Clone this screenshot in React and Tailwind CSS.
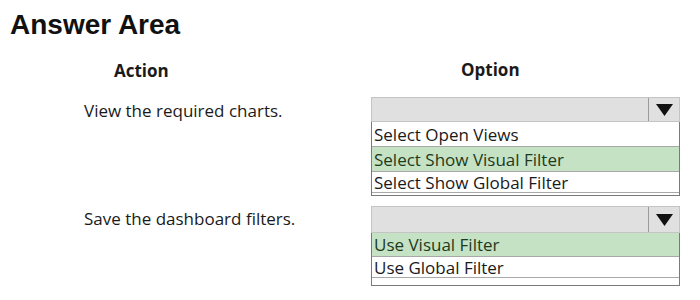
const bodyFont = { fontFamily: '"Open Sans", "Noto Sans", sans-serif' };

function Arrow() {
  return (
    <svg width="17" height="12" viewBox="0 0 17 12" aria-hidden="true">
      <path d="M0 0 H17 L8.5 12 Z" fill="#111" />
    </svg>
  );
}

function Dropdown({ options, selected, rowHeights, headerHeight, tail }) {
  return (
    <div className="w-[309px]">
      <div className="flex border border-[#c4c4c4] bg-[#e0e0e0]" style={{ height: headerHeight }}>
        <div className="flex-1" />
        <div className="flex w-[31px] items-center justify-center border-l border-[#9a9a9a]">
          <Arrow />
        </div>
      </div>
      <div className="border-x border-b border-[#7a7a7a]">
        {options.map((opt, i) => (
          <div
            key={opt}
            className={
              'flex items-center overflow-hidden border-b border-[#a8a8a8] pl-[2px] text-[17px] leading-none ' +
              (i === selected ? 'bg-[#c6e2c4] text-[#1d3a1d]' : 'bg-white text-[#1a1a1a]')
            }
            style={{ height: rowHeights[i] }}
          >
            {opt}
          </div>
        ))}
        <div className="bg-white" style={{ height: tail }} />
      </div>
    </div>
  );
}

export default function App() {
  return (
    <div className="h-[300px] w-[700px] overflow-hidden bg-white text-[#1a1a1a]" style={bodyFont}>
      <h1
        className="pl-[10px] pt-[8px] text-[28px] font-bold leading-[34px] text-[#111]"
        style={{ fontFamily: '"Liberation Sans", Arial, sans-serif' }}
      >
        Answer Area
      </h1>

      <div className="mt-[18px] flex h-[28px] items-start">
        <div className="w-[371px] pl-[114px] text-[17px] font-bold leading-[22px]">Action</div>
        <div className="w-[309px] pl-[90px] text-[17px] font-bold leading-[20px]">Option</div>
      </div>

      <div className="mt-[9px] flex items-start">
        <div className="w-[371px] pl-[84px] pt-[2px] text-[17px] leading-[24px]">View the required charts.</div>
        <Dropdown
          options={['Select Open Views', 'Select Show Visual Filter', 'Select Show Global Filter']}
          selected={1}
          headerHeight={25}
          rowHeights={[25, 25, 21]}
          tail={2}
        />
      </div>

      <div className="mt-[10px] flex items-start">
        <div className="w-[371px] pl-[84px] pt-[1px] text-[17px] leading-[24px]">Save the dashboard filters.</div>
        <Dropdown
          options={['Use Visual Filter', 'Use Global Filter']}
          selected={0}
          headerHeight={27}
          rowHeights={[24, 21]}
          tail={7}
        />
      </div>
    </div>
  );
}
